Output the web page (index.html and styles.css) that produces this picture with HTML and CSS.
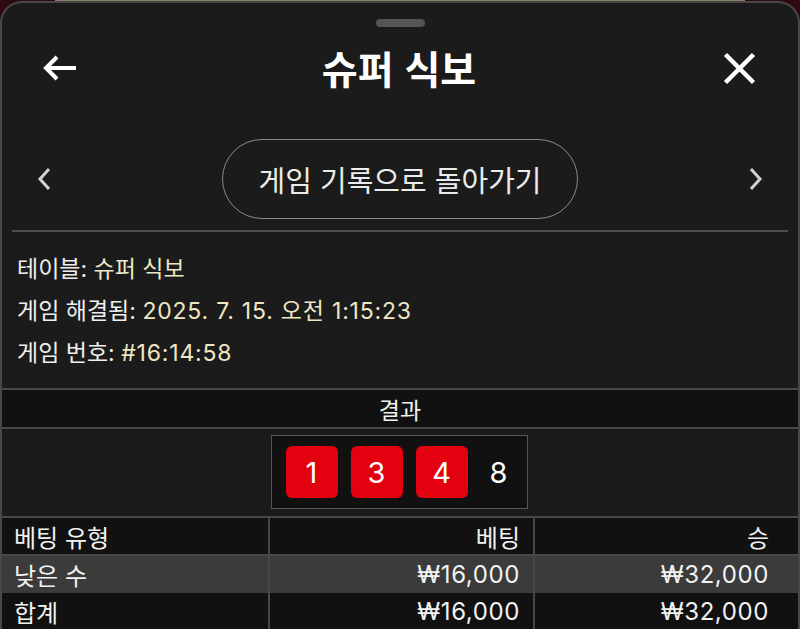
FILE: index.html
```html
<!DOCTYPE html>
<html lang="ko">
<head>
<meta charset="utf-8">
<title>슈퍼 식보</title>
<link rel="stylesheet" href="styles.css">
</head>
<body>
<div class="backdrop-strip"></div>
<div class="panel">
  <div class="handle"></div>
  <div class="topbar">
    <button class="icon-btn back" aria-label="뒤로">
      <svg width="35" height="26" viewBox="0 0 35 26"><path d="M34 13H4M15 2L4 13L15 24" fill="none" stroke="#fff" stroke-width="4"/></svg>
    </button>
    <h1 class="title">슈퍼 식보</h1>
    <button class="icon-btn close" aria-label="닫기">
      <svg width="33" height="33" viewBox="0 0 33 33"><path d="M2.5 2.5L30.5 30.5M30.5 2.5L2.5 30.5" fill="none" stroke="#fff" stroke-width="4.5"/></svg>
    </button>
  </div>
  <div class="nav">
    <button class="icon-btn chev prev" aria-label="이전">
      <svg width="14" height="24" viewBox="0 0 14 24"><path d="M12 2L3 12L12 22" fill="none" stroke="#d2d2d2" stroke-width="3"/></svg>
    </button>
    <button class="pill">게임 기록으로 돌아가기</button>
    <button class="icon-btn chev next" aria-label="다음">
      <svg width="14" height="24" viewBox="0 0 14 24"><path d="M2 2L11 12L2 22" fill="none" stroke="#d2d2d2" stroke-width="3"/></svg>
    </button>
  </div>
  <div class="divider"></div>
  <div class="info">
    <div class="info-line"><span class="label">테이블:</span> <span class="value">슈퍼 식보</span></div>
    <div class="info-line"><span class="label">게임 해결됨:</span> <span class="value numeric">2025. 7. 15. 오전 1:15:23</span></div>
    <div class="info-line"><span class="label">게임 번호:</span> <span class="value numeric">#16:14:58</span></div>
  </div>
  <div class="result-head">결과</div>
  <div class="dice-row">
    <div class="dice-box">
      <div class="die">1</div>
      <div class="die">3</div>
      <div class="die">4</div>
      <div class="sum">8</div>
    </div>
  </div>
  <div class="bets">
    <div class="row head">
      <div class="cell">베팅 유형</div>
      <div class="cell num">베팅</div>
      <div class="cell num last">승</div>
    </div>
    <div class="row hl">
      <div class="cell">낮은 수</div>
      <div class="cell num amount">₩16,000</div>
      <div class="cell num last amount">₩32,000</div>
    </div>
    <div class="row">
      <div class="cell">합계</div>
      <div class="cell num amount">₩16,000</div>
      <div class="cell num last amount">₩32,000</div>
    </div>
  </div>
</div>
</body>
</html>
```

FILE: styles.css
```css
* { box-sizing: border-box; }
html, body { margin: 0; padding: 0; }
body {
  background: #2e0912;
  font-family: Inter, "Noto Sans CJK KR", sans-serif;
  color: #f2f2f2;
  height: 629px;
  overflow: hidden;
  position: relative;
}
.backdrop-strip {
  position: absolute;
  top: 0;
  left: 55px;
  width: 690px;
  height: 2px;
  background: #8a826f;
}
.panel {
  position: relative;
  margin-top: 1px;
  height: 628px;
  background: #1b1b1b;
  border: 2px solid #474747;
  border-bottom: none;
  border-radius: 22px 22px 0 0;
  overflow: hidden;
}
.handle {
  width: 49px;
  height: 8px;
  margin: 16px auto 0;
  background: #555;
  border-radius: 4px;
}
.icon-btn {
  background: none;
  border: none;
  padding: 0;
  margin: 0;
  display: flex;
  align-items: center;
  cursor: pointer;
}
.topbar {
  margin-top: 9px;
  height: 64px;
  display: grid;
  grid-template-columns: 1fr auto 1fr;
  align-items: center;
  padding: 0 42px 0 40px;
}
.close { justify-self: end; }
.title {
  margin: 0;
  font-family: "Noto Sans CJK KR", sans-serif;
  font-size: 39px;
  font-weight: 700;
  color: #fff;
  line-height: 1;
  position: relative;
  top: -1px;
}
.nav {
  margin-top: 39px;
  height: 80px;
  display: grid;
  grid-template-columns: 1fr auto 1fr;
  align-items: center;
  padding: 0 35px 0 35px;
}
.next { justify-self: end; }
.pill {
  height: 80px;
  padding: 0 35px;
  background: transparent;
  border: 1.5px solid #8a8a8a;
  border-radius: 40px;
  color: #ececec;
  font-family: "Noto Sans CJK KR", sans-serif;
  font-size: 29px;
  line-height: 1;
}
.divider {
  margin: 11px 10px 0;
  height: 2px;
  background: #4d4d4d;
}
.info {
  padding: 16px 15px 14px;
  font-size: 23px;
  line-height: 42px;
}
.label { color: #efefef; }
.value { color: #efe6c3; }
.numeric { letter-spacing: 0.8px; }
.result-head {
  height: 41px;
  border-top: 2px solid #474747;
  border-bottom: 2px solid #474747;
  background: #111;
  font-size: 23px;
  display: flex;
  align-items: center;
  justify-content: center;
  color: #f2f2f2;
}
.dice-row {
  height: 87px;
  display: flex;
  justify-content: center;
  padding-top: 6px;
}
.dice-box {
  height: 74px;
  display: flex;
  align-items: center;
  gap: 13px;
  padding: 0 10px 0 14px;
  background: #111;
  border: 1px solid #555;
  position: relative;
  left: -1px;
}
.die {
  width: 52px;
  height: 52px;
  border-radius: 6px;
  background: #e3000f;
  color: #fff;
  font-size: 29px;
  display: flex;
  align-items: center;
  justify-content: center;
}
.sum {
  width: 36px;
  text-align: center;
  font-size: 29px;
  color: #fff;
}
.bets { border-top: 2px solid #474747; }
.row {
  display: grid;
  grid-template-columns: 266px 265px 1fr;
  height: 37px;
  background: #111;
}
.row.head {
  height: 38px;
  border-bottom: 2px solid #474747;
}
.row.hl { background: #3b3b3b; }
.cell {
  display: flex;
  align-items: center;
  padding: 0 12px;
  font-size: 24px;
  color: #f2f2f2;
}
.cell + .cell { border-left: 2px solid #474747; }
.num { justify-content: flex-end; padding-right: 13px; }
.num.last { padding-right: 29px; }
.amount { letter-spacing: 0.6px; }
```
